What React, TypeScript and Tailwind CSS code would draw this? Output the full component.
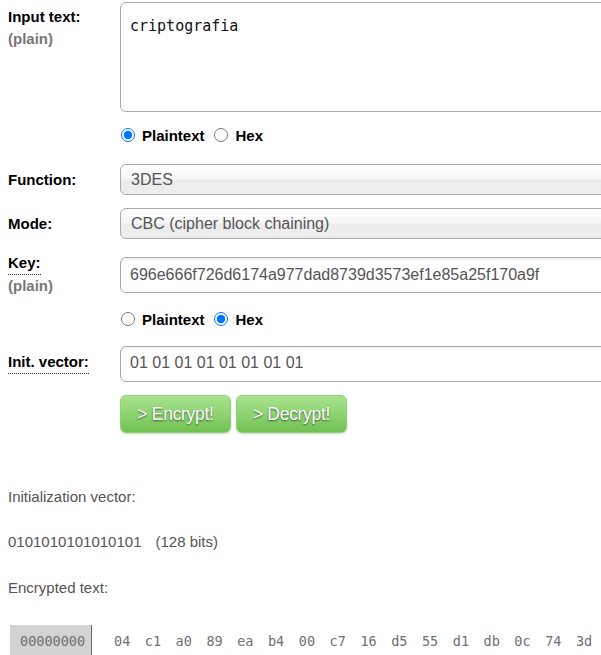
import React from 'react'

const bytes = ['04', 'c1', 'a0', '89', 'ea', 'b4', '00', 'c7', '16', 'd5', '55', 'd1', 'db', '0c', '74', '3d']

const sans = "font-['Liberation_Sans',Arial,sans-serif]"
const mono = "font-['DejaVu_Sans_Mono','Liberation_Mono',monospace]"

const fieldBox = 'w-[560px] shrink-0 border border-[#a9a9a9] rounded-[6px]'
const selectBg = 'bg-[linear-gradient(#ffffff,#f6f6f6_48%,#ececec_52%,#eeeeee)]'

function RadioRow({ name, checked }: { name: string; checked: 'plain' | 'hex' }) {
  return (
    <div className="flex items-center h-[22px] pl-[120px] text-[15px] font-bold text-black">
      <input
        type="radio"
        name={name}
        defaultChecked={checked === 'plain'}
        className="m-0 ml-[1px] mb-[3px] w-[14px] h-[14px] accent-[#0075ff]"
      />
      <span className="ml-[7px]">Plaintext</span>
      <input
        type="radio"
        name={name}
        defaultChecked={checked === 'hex'}
        className="m-0 ml-[9px] mb-[3px] w-[14px] h-[14px] accent-[#0075ff]"
      />
      <span className="ml-[8px]">Hex</span>
    </div>
  )
}

export default function App() {
  return (
    <div className={`w-[601px] h-[655px] overflow-hidden bg-white pt-[2px] ${sans}`}>
      {/* input text */}
      <div className="flex">
        <div className="w-[120px] shrink-0 pl-[8px] mt-[4px] text-[15px] font-bold leading-[22px]">
          <div className="text-black">Input text:</div>
          <div className="text-[#777]">(plain)</div>
        </div>
        <textarea
          defaultValue="criptografia"
          className={`${fieldBox} h-[110px] resize-none pl-[9px] pt-[13px] text-[15px] leading-[20px] text-[#111] ${mono} outline-none`}
        />
      </div>

      <div className="mt-[13px]">
        <RadioRow name="intype" checked="plain" />
      </div>

      {/* function */}
      <div className="flex items-center mt-[17px]">
        <div className="w-[120px] shrink-0 pl-[8px] text-[15px] font-bold leading-[17px] text-black">Function:</div>
        <div className={`${fieldBox} ${selectBg} h-[31px] flex items-center pl-[10px] text-[16px] text-[#555]`}>3DES</div>
      </div>

      {/* mode */}
      <div className="flex items-center mt-[13px]">
        <div className="w-[120px] shrink-0 pl-[8px] text-[15px] font-bold leading-[17px] text-black">Mode:</div>
        <div className={`${fieldBox} ${selectBg} h-[31px] flex items-center pl-[10px] text-[16px] text-[#555]`}>
          CBC (cipher block chaining)
        </div>
      </div>

      {/* key */}
      <div className="flex items-start h-[36px] mt-[18px]">
        <div className="w-[120px] shrink-0 pl-[8px] -mt-[4px] text-[15px] font-bold leading-[19px]">
          <div>
            <span className="text-black border-b border-dotted border-[#333] pb-[3px]">Key:</span>
          </div>
          <div className="mt-[4px] text-[#777]">(plain)</div>
        </div>
        <div
          className={`${fieldBox} h-[36px] flex items-center pl-[9px] bg-white shadow-[inset_0_2px_3px_rgba(0,0,0,0.06)] text-[16px] text-[#555]`}
        >
          696e666f726d6174a977dad8739d3573ef1e85a25f170a9f
        </div>
      </div>

      <div className="mt-[16px]">
        <RadioRow name="keytype" checked="hex" />
      </div>

      {/* init vector */}
      <div className="flex items-start mt-[15px]">
        <div className="w-[120px] shrink-0 pl-[8px] mt-[7px] text-[15px] font-bold leading-[17px]">
          <span className="text-black border-b border-dotted border-[#333] pb-[3px]">Init. vector:</span>
        </div>
        <div
          className={`${fieldBox} h-[36px] flex items-center pl-[9px] pb-[3px] bg-white shadow-[inset_0_2px_3px_rgba(0,0,0,0.06)] text-[16px] text-[#555]`}
        >
          01 01 01 01 01 01 01 01
        </div>
      </div>

      {/* buttons */}
      <div className="flex gap-[5px] mt-[13px] pl-[120px]">
        {['> Encrypt!', '> Decrypt!'].map((label) => (
          <button
            key={label}
            className="w-[111px] h-[38px] rounded-[6px] border border-[#8fd172] bg-[linear-gradient(#a8e38e,#8ed472_50%,#6fc152)] shadow-[0_1px_2px_rgba(0,0,0,0.18)] text-white text-[17.5px] tracking-[-0.3px] [text-shadow:0_1px_2px_rgba(0,0,0,0.6)]"
          >
            {label}
          </button>
        ))}
      </div>

      {/* result */}
      <div className="px-[8px] text-[15px] leading-[17px] text-[#555]">
        <p className="mt-[55px]">Initialization vector:</p>
        <p className="mt-[28px]">
          0101010101010101<span className="ml-[14px]">(128 bits)</span>
        </p>
        <p className="mt-[29px]">Encrypted text:</p>
      </div>

      <div className={`flex items-center mt-[29px] ${mono} text-[13.5px] text-[#707070]`}>
        <div className="shrink-0 ml-[10px] h-[32px] w-[82px] flex items-center pl-[10px] bg-[#d3d3d3] border-r border-[#666]">
          00000000
        </div>
        <div className="flex shrink-0 ml-[22px]">
          {bytes.map((b, i) => (
            <span key={i} className="w-[30.8px] shrink-0">
              {b}
            </span>
          ))}
        </div>
      </div>
    </div>
  )
}
